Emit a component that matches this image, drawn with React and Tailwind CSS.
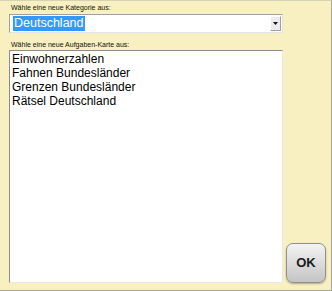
export default function App() {
  const items = ['Einwohnerzahlen', 'Fahnen Bundesländer', 'Grenzen Bundesländer', 'Rätsel Deutschland']

  return (
    <div
      className="w-[332px] h-[291px] bg-[#f8f0c0] border-t border-t-[#d6d2b6] border-r border-b border-r-[#a6a6a0] border-b-[#a6a6a0] flex"
      style={{ fontFamily: '"Liberation Sans", Arial, sans-serif' }}
    >
      {/* left column: category + card list */}
      <div className="w-[283px] pl-[9px] flex flex-col">
        <div className="h-[13px] pl-[2px] pt-[3px] text-[7px] leading-[8px] text-[#111]">
          Wähle eine neue Kategorie aus:
        </div>
        <div className="h-[19px] bg-white border border-t-[#a0a0a0] border-l-[#a0a0a0] border-r-[#e4e4e4] border-b-[#e4e4e4] flex items-center pl-[3px] pr-[1px]">
          <span className="bg-[#3399ff] text-white text-[12.5px] leading-[15px] px-[1px]">Deutschland</span>
          <div className="flex-1" />
          <div className="w-[11px] h-[15px] bg-[#ececec] border border-t-white border-l-white border-r-[#a0a0a0] border-b-[#a0a0a0] flex items-center justify-center">
            <svg width="5" height="3" viewBox="0 0 5 3"><path d="M0 0h5L2.5 3z" fill="#111" /></svg>
          </div>
        </div>
        <div className="h-[17px] pl-[2px] pt-[8px] text-[7px] leading-[8px] text-[#111]">
          Wähle eine neue Aufgaben-Karte aus:
        </div>
        <div className="h-[233px] bg-white border border-t-[#8c8c8c] border-l-[#8c8c8c] border-r-[#e8e8e8] border-b-[#e8e8e8] pl-[2px] pt-[1px]">
          {items.map(it => (
            <div key={it} className="text-[12px] leading-[14px] text-black">{it}</div>
          ))}
        </div>
      </div>

      {/* OK button */}
      <div className="flex-1 flex items-end pb-[7px] pl-[3px]">
        <button className="w-[40px] h-[40px] rounded-[7px] border border-[#8f8f8f] bg-gradient-to-b from-[#f4f4f4] to-[#c4c4c4] shadow-[0_1px_2px_rgba(0,0,0,0.3)] text-[13px] font-bold text-[#1a1a1a]">
          OK
        </button>
      </div>
    </div>
  )
}
